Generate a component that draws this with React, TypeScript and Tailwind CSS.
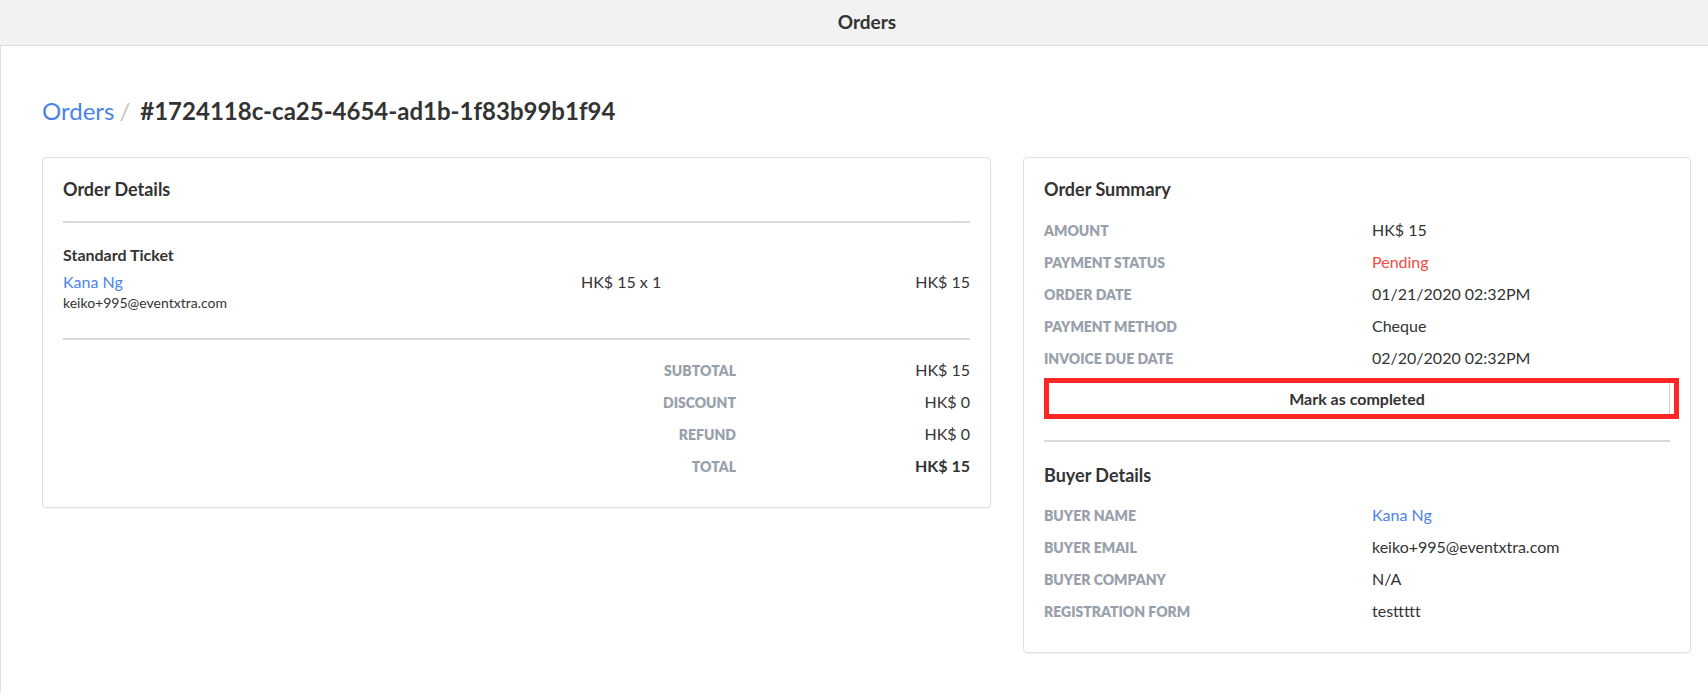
import React from "react";

const blue = "text-[#4a84e8]";

function Divider({ className = "" }: { className?: string }) {
  return <div className={`h-[2px] bg-[#d6dade] ${className}`} />;
}

function InfoRow({ label, value, valueClass = "" }: { label: string; value: string; valueClass?: string }) {
  return (
    <div className="grid grid-cols-2 gap-x-[30px] h-[24px] mb-[8px]">
      <div className="text-[14px] font-extrabold leading-[24px] text-[#98a1ab] uppercase pt-[0.5px]">{label}</div>
      <div className={`text-[16px] leading-[24px] ${valueClass || "text-[#333]"}`}>{value}</div>
    </div>
  );
}

function TotalRow({ label, value, bold = false }: { label: string; value: string; bold?: boolean }) {
  return (
    <div className="flex h-[24px] mb-[8px]">
      <div className="flex-1 text-right text-[14px] font-extrabold leading-[24px] text-[#98a1ab] pt-[0.5px]">{label}</div>
      <div className={`w-[234px] text-right text-[16px] leading-[24px] text-[#333] ${bold ? "font-bold" : ""}`}>{value}</div>
    </div>
  );
}

export default function App() {
  return (
    <div className="min-h-screen bg-white font-['Lato','Noto_Sans',sans-serif] text-[#333]">
      <header className="h-[46px] bg-[#f2f2f2] border-b border-[#dcdcdc] flex items-center justify-center pl-[26px]">
        <span className="text-[19px] font-bold text-[#333]">Orders</span>
      </header>
      <main className="border-l border-[#e2e2e2] pl-[41px] pr-[17px] pt-[50px] pb-[40px]">
        <div className="text-[24px] leading-[29px] flex items-baseline">
          <span className={blue}>Orders</span>
          <span className="text-[#c4c4c4] ml-[5px] mr-[10px]">/</span>
          <span className="font-bold text-[#333]">#1724118c-ca25-4654-ad1b-1f83b99b1f94</span>
        </div>

        <div className="flex items-start gap-[32px] mt-[32px]">
          {/* Order Details */}
          <section className="w-[949px] border border-[#dcdfe3] rounded-[4px] shadow-[0_1px_1px_rgba(0,0,0,0.04)] px-[20px] pt-[20px] pb-[21px]">
            <h2 className="text-[18px] font-bold leading-[22px] text-[#333]">Order Details</h2>
            <Divider className="mt-[21px]" />
            <div className="pt-[20px]">
              <div className="text-[16px] font-bold leading-[24px] mb-[4px] text-[#333]">Standard Ticket</div>
              <div className="flex items-start">
                <div className="w-[518px]">
                  <div className={`text-[16px] leading-[22px] ${blue}`}>Kana Ng</div>
                  <div className="text-[14px] leading-[20px] text-[#333]">keiko+995@eventxtra.com</div>
                </div>
                <div className="text-[16px] leading-[22px] text-[#333]">HK$ 15 x 1</div>
                <div className="flex-1 text-right text-[16px] leading-[22px] text-[#333]">HK$ 15</div>
              </div>
            </div>
            <Divider className="mt-[25px]" />
            <div className="pt-[18px]">
              <TotalRow label="SUBTOTAL" value="HK$ 15" />
              <TotalRow label="DISCOUNT" value="HK$ 0" />
              <TotalRow label="REFUND" value="HK$ 0" />
              <TotalRow label="TOTAL" value="HK$ 15" bold />
            </div>
          </section>

          {/* Order Summary */}
          <section className="w-[668px] border border-[#dcdfe3] rounded-[4px] shadow-[0_1px_1px_rgba(0,0,0,0.04)] px-[20px] pt-[20px] pb-[21px]">
            <h2 className="text-[18px] font-bold leading-[22px] text-[#333]">Order Summary</h2>
            <div className="mt-[18px]">
              <InfoRow label="Amount" value="HK$ 15" />
              <InfoRow label="Payment Status" value="Pending" valueClass="text-[#ef4a3f]" />
              <InfoRow label="Order Date" value="01/21/2020 02:32PM" />
              <InfoRow label="Payment Method" value="Cheque" />
              <InfoRow label="Invoice Due Date" value="02/20/2020 02:32PM" />
            </div>
            <div className="relative h-[41px] mt-[2px]">
              <button className="w-full h-[41px] border border-[#cfcfcf] bg-white text-[16px] font-bold text-[#333]">
                Mark as completed
              </button>
              <div className="absolute top-0 bottom-0 left-0 right-[-9px] border-[5px] border-[#ff2626] pointer-events-none" />
            </div>
            <Divider className="mt-[21px]" />
            <h2 className="mt-[22px] text-[18px] font-bold leading-[22px] text-[#333]">Buyer Details</h2>
            <div className="mt-[17px]">
              <InfoRow label="Buyer Name" value="Kana Ng" valueClass={blue} />
              <InfoRow label="Buyer Email" value="keiko+995@eventxtra.com" />
              <InfoRow label="Buyer Company" value="N/A" />
              <InfoRow label="Registration Form" value="testtttt" />
            </div>
          </section>
        </div>
      </main>
    </div>
  );
}
